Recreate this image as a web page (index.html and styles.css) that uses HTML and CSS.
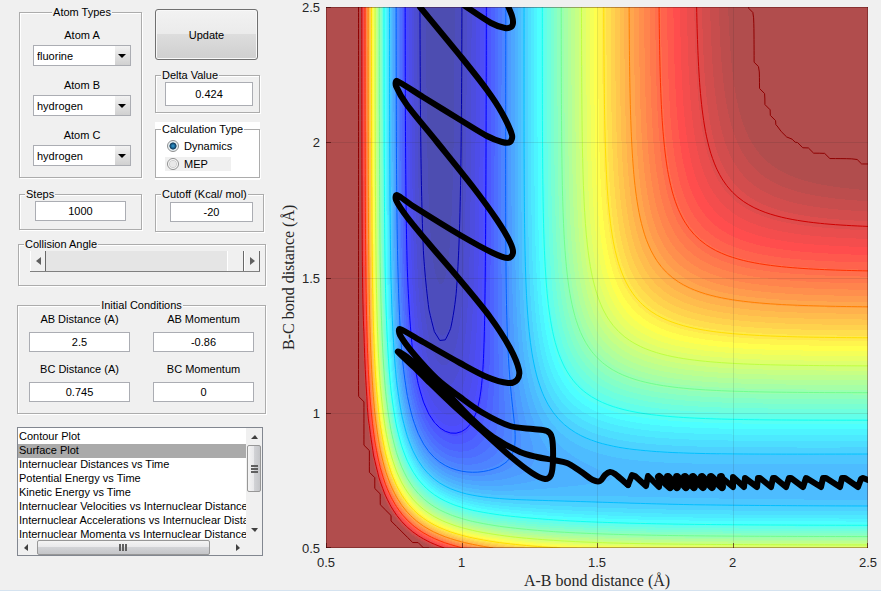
FILE: index.html
```html
<!DOCTYPE html>
<html lang="en">
<head>
    <meta charset="UTF-8">
    <title>LEPS GUI</title>
    <link rel="stylesheet" href="styles.css">
</head>
<body>
    <form class="controls">
        <div class="top">
            <!-- Left column -->
            <div class="column">
                <fieldset class="group atoms">
                    <legend>Atom Types</legend>
                    <label for="atomA">Atom A</label>
                    <div class="dropdown">
                        <select id="atomA"><option>fluorine</option><option>hydrogen</option></select>
                    </div>
                    <label for="atomB">Atom B</label>
                    <div class="dropdown">
                        <select id="atomB"><option>hydrogen</option><option>fluorine</option></select>
                    </div>
                    <label for="atomC">Atom C</label>
                    <div class="dropdown">
                        <select id="atomC"><option>hydrogen</option><option>fluorine</option></select>
                    </div>
                </fieldset>
                <fieldset class="group steps">
                    <legend>Steps</legend>
                    <div class="inner">
                        <input type="text" class="field" aria-label="Steps" value="1000">
                    </div>
                </fieldset>
            </div>

            <!-- Right column -->
            <div class="column">
                <button type="button" class="update">Update</button>
                <fieldset class="group delta">
                    <legend>Delta Value</legend>
                    <div class="inner">
                        <input type="text" class="field tall" aria-label="Delta Value" value="0.424">
                    </div>
                </fieldset>
                <div class="white">
                    <fieldset class="group calc">
                        <legend>Calculation Type</legend>
                        <div class="inner">
                            <label class="radio"><input type="radio" name="calc" checked>Dynamics</label>
                            <label class="radio shaded"><input type="radio" name="calc">MEP</label>
                        </div>
                    </fieldset>
                </div>
                <fieldset class="group cutoff">
                    <legend>Cutoff (Kcal/ mol)</legend>
                    <div class="inner">
                        <input type="text" class="field" aria-label="Cutoff" value="-20">
                    </div>
                </fieldset>
            </div>
        </div>

        <fieldset class="group angle">
            <legend>Collision Angle</legend>
            <div class="slider">
                <button type="button" aria-label="Decrease"><svg width="5" height="8" viewBox="0 0 5 8"><path d="M5 0V8L0 4Z"/></svg></button>
                <input type="range" min="0" max="180" value="180" aria-label="Collision Angle">
                <button type="button" aria-label="Increase"><svg width="5" height="8" viewBox="0 0 5 8"><path d="M0 0V8L5 4Z"/></svg></button>
            </div>
        </fieldset>

        <fieldset class="group initial">
            <legend>Initial Conditions</legend>
            <div class="cell">
                <label for="abDist">AB Distance (A)</label>
                <input type="text" class="field" id="abDist" value="2.5">
            </div>
            <div class="cell">
                <label for="abMom">AB Momentum</label>
                <input type="text" class="field" id="abMom" value="-0.86">
            </div>
            <div class="cell">
                <label for="bcDist">BC Distance (A)</label>
                <input type="text" class="field" id="bcDist" value="0.745">
            </div>
            <div class="cell">
                <label for="bcMom">BC Momentum</label>
                <input type="text" class="field" id="bcMom" value="0">
            </div>
        </fieldset>

        <!-- Plot list with its scroll bars -->
        <div class="listbox">
            <select size="8" aria-label="Plot type">
                <option>Contour Plot</option>
                <option selected>Surface Plot</option>
                <option>Internuclear Distances vs Time</option>
                <option>Potential Energy vs Time</option>
                <option>Kinetic Energy vs Time</option>
                <option>Internuclear Velocities vs Internuclear Distance</option>
                <option>Internuclear Accelerations vs Internuclear Distance</option>
                <option>Internuclear Momenta vs Internuclear Distance</option>
            </select>
            <div class="vbar">
                <svg class="arrow" width="7" height="4" viewBox="0 0 7 4"><path d="M0 4H7L4 0Z"/></svg>
                <div class="thumb"><i></i><i></i><i></i></div>
                <svg class="arrow" width="7" height="4" viewBox="0 0 7 4"><path d="M0 0H7L4 4Z"/></svg>
            </div>
            <div class="hbar">
                <svg class="arrow" width="4" height="7" viewBox="0 0 4 7"><path d="M4 0V7L0 4Z"/></svg>
                <div class="thumb"><i></i><i></i><i></i></div>
                <svg class="arrow" width="4" height="7" viewBox="0 0 4 7"><path d="M0 0V7L4 4Z"/></svg>
            </div>
        </div>
    </form>

    <div class="plot">
        <div class="ylabel">B-C bond distance (Å)</div>
        <div class="yticks"><span>2.5</span><span>2</span><span>1.5</span><span>1</span><span>0.5</span></div>
        <div class="area"><canvas id="surface"></canvas></div>
        <div class="xticks"><span>0.5</span><span>1</span><span>1.5</span><span>2</span><span>2.5</span></div>
        <div class="xlabel">A-B bond distance (Å)</div>
    </div>

    <script src="plot.js"></script>
</body>
</html>
```
FILE: styles.css
```css
* {
    box-sizing: border-box;
}
body {
    margin: 0;
    min-height: 100vh;
    display: flex;
    background-color: #f0f0f0;
    border-bottom: 1px solid #d5e3f0;
    font-family: "Liberation Sans", Arial, sans-serif;
    font-size: 11px;
    line-height: 14px;
    color: #000;
}
input, select, button {
    font: inherit;
    color: inherit;
    margin: 0;
}

/* Left panel */
.controls {
    width: 266px;
    flex: none;
    padding: 5px 0 0 17px;
}
.top {
    display: grid;
    grid-template-columns: 123px 108px;
    column-gap: 13px;
    padding-left: 2px;
}
.column {
    display: flex;
    flex-direction: column;
}
.group {
    min-width: 0;
    margin: 0;
    padding: 0;
    border: 1px solid #acacac;
    box-shadow: 1px 1px 0 #fff, inset 1px 1px 0 #fff;
}
.group legend {
    margin-left: 5px;
    padding: 0 1px;
    background-color: #f0f0f0;
    white-space: nowrap;
}
.field {
    display: block;
    width: 100%;
    height: 20px;
    padding: 0;
    border: 1px solid #abadb3;
    background-color: #fff;
    text-align: center;
}
.tall {
    height: 24px;
}
.atoms {
    height: 173px;
    padding: 9px 10px 0 13px;
}
.group.atoms legend, .group.initial legend {
    margin: 0 auto;
}
.atoms label {
    display: block;
    text-align: center;
}
.dropdown {
    position: relative;
    margin: 3px 0 12px;
}
.dropdown select {
    display: block;
    appearance: none;
    width: 100%;
    height: 21px;
    padding: 0 3px;
    border: 1px solid #abadb3;
    border-radius: 0;
    background-color: #fff;
}
.dropdown::before {
    content: "";
    position: absolute;
    right: 1px;
    top: 1px;
    bottom: 1px;
    width: 15px;
    background: linear-gradient(#f2f2f2, #d0d0d0);
    pointer-events: none;
}
.dropdown::after {
    content: "";
    position: absolute;
    right: 5px;
    top: 9px;
    border: 4px solid transparent;
    border-top-color: #000;
    border-bottom: 0;
    pointer-events: none;
}
.steps {
    height: 43px;
    margin-top: 9px;
}
.steps .inner {
    padding: 0 15px;
}
.update {
    width: 103px;
    height: 51px;
    margin: 4px 0 8px;
    border: 1px solid #707070;
    border-radius: 3px;
    background: linear-gradient(#f2f2f2, #ebebeb 49%, #dddddd 50%, #cfcfcf);
    box-shadow: inset 0 0 0 1px #f8f8f8;
}
.delta {
    width: 105px;
    height: 45px;
}
.delta .inner {
    padding: 0 6px 0 9px;
}
.white {
    width: 105px;
    margin-top: 9px;
    padding-bottom: 2px;
    background-color: #fff;
}
.calc {
    height: 56px;
}
.calc .inner {
    padding: 1px 9px 0;
}
.group.calc legend {
    background-color: #fff;
}
.radio {
    display: flex;
    align-items: center;
    gap: 5px;
    height: 14px;
    margin: 2px 0 4px;
}
.shaded {
    width: 66px;
    background-color: #f0f0f0;
}
.radio input {
    appearance: none;
    width: 12px;
    height: 12px;
    margin-left: 2px;
    border: 1px solid #8e8f8f;
    border-radius: 50%;
    background: radial-gradient(#e8e8e8 40%, #d0d0d0 50%, #fff 65%);
}
.radio input:checked {
    background: radial-gradient(circle at 50% 50%, #3ba0d0 0, #1c6a9c 25%, #123a58 45%, #e8f0f4 55%);
}
.cutoff {
    width: 109px;
    height: 45px;
    margin-top: 7px;
}
.cutoff .inner {
    padding: 1px 10px 0 14px;
}

.angle {
    height: 49px;
    margin-top: 5px;
    margin-left: 1px;
}
.slider {
    display: flex;
    height: 21px;
    margin: 0 5px 0 11px;
    border-bottom: 1px solid #808080;
}
.slider button {
    width: 16px;
    padding: 0;
    border: 0;
    border-left: 1px solid #fff;
    border-right: 1px solid #696969;
    background-color: #f0f0f0;
    fill: #606060;
}
.slider input {
    appearance: none;
    flex: 1;
    min-width: 0;
    height: 20px;
    background-color: #e5e5e5;
}
.slider input::-webkit-slider-thumb {
    appearance: none;
    width: 17px;
    height: 20px;
    border-left: 1px solid #fff;
    border-right: 1px solid #696969;
    background-color: #f0f0f0;
}

.initial {
    height: 116px;
    margin-top: 12px;
    display: grid;
    grid-template-columns: 101px 101px;
    column-gap: 23px;
    row-gap: 10px;
    align-content: start;
    padding: 0 11px;
}
.cell {
    text-align: center;
}
.cell label {
    display: block;
    height: 20px;
}

/* List box */
.listbox {
    width: 246px;
    height: 129px;
    margin-top: 13px;
    display: grid;
    grid-template-columns: 228px 1fr;
    grid-template-rows: 111px 1fr;
    border: 1px solid #828790;
}
.listbox select {
    display: block;
    width: 100%;
    height: 111px;
    padding: 2px 0 0;
    border: 0;
    border-radius: 0;
    background-color: #fff;
    overflow: hidden;
    scrollbar-width: none;
}
.listbox option {
    min-height: 14px;
    height: 14px;
    padding: 0 1px;
    line-height: 14px;
    white-space: nowrap;
}
.listbox option:checked {
    color: #000;
    background: linear-gradient(#aaa, #aaa);
}
.vbar, .hbar {
    display: flex;
    align-items: center;
    justify-content: space-between;
    background-color: #f0f0f0;
}
.vbar {
    flex-direction: column;
    padding: 7px 0;
}
.hbar {
    padding: 0 6px;
}
.thumb {
    display: flex;
    align-items: center;
    justify-content: center;
    gap: 1px;
    border: 1px solid #979797;
    border-radius: 2px;
}
.thumb i {
    background-color: #606060;
}
.vbar .thumb {
    flex-direction: column;
    width: 14px;
    height: 47px;
    margin-bottom: 30px;
    background: linear-gradient(to right, #f4f4f4, #e8e8ea 49%, #d2d3d6 50%, #c4c5c8);
}
.vbar .thumb i {
    width: 7px;
    height: 2px;
}
.hbar .thumb {
    width: 173px;
    height: 15px;
    margin-right: 18px;
    background: linear-gradient(#f4f4f4, #e8e8ea 49%, #d2d3d6 50%, #c4c5c8);
}
.hbar .thumb i {
    width: 2px;
    height: 7px;
}
.arrow {
    fill: #404040;
}

/* Plot */
.plot {
    flex: 1;
    min-width: 0;
    display: grid;
    grid-template-columns: 20px 26px minmax(0, 1fr);
    grid-template-rows: minmax(0, 1fr) 24px 18px;
    padding: 7px 13px 0 14px;
    color: #262626;
    font-size: 13px;
}
.ylabel, .xlabel {
    font-family: "Liberation Serif", "Times New Roman", serif;
    font-size: 16px;
    line-height: 18px;
    text-align: center;
}
.ylabel {
    writing-mode: vertical-rl;
    transform: rotate(180deg);
}
.yticks, .xticks {
    display: flex;
    justify-content: space-between;
}
.yticks {
    flex-direction: column;
    align-items: flex-end;
    padding-right: 6px;
}
.yticks span {
    height: 0;
    line-height: 2px;
}
.area {
    min-height: 0;
    overflow: hidden;
}
.area canvas {
    display: block;
    width: 100%;
    height: 100%;
}
.xticks {
    grid-column: 3;
    padding-top: 8px;
}
.xticks span {
    display: flex;
    justify-content: center;
    width: 0;
}
.xlabel {
    grid-column: 3;
}
```
FILE: plot.js
```js
// LEPS parameters: well depth (kcal/mol), beta, equilibrium distance, Sato
var HF = { d: 141.196, b: 2.2187, r: 0.917, k: 0.18 };
var HH = { d: 109.449, b: 1.942, r: 0.7419, k: 0.175 };
var CUTOFF = -22;
var VMIN = -141;
var MIN = 0.5, MAX = 2.5, STEP = 0.02;

function terms(p, r) {
    var e = Math.exp(-p.b * (r - p.r));
    var c = p.d / (4 * (1 + p.k));
    return {
        q: c * ((3 + p.k) * e * e - (2 + 6 * p.k) * e),
        j: c * ((1 + 3 * p.k) * e * e - (6 + 2 * p.k) * e)
    };
}

// Potential for a collinear geometry
function potential(ab, bc) {
    var a = terms(HF, ab), b = terms(HH, bc), c = terms(HF, ab + bc);
    var s = Math.pow(a.j - b.j, 2) + Math.pow(b.j - c.j, 2) + Math.pow(c.j - a.j, 2);
    return Math.min(CUTOFF, a.q + b.q + c.q - Math.sqrt(s / 2));
}

function jet(t, alpha) {
    t = Math.max(1, Math.min(63, Math.floor(t * 64) + 1)) / 64;
    function channel(centre) {
        var v = Math.max(0, Math.min(1, 1.5 - Math.abs(4 * t - centre)));
        return Math.round(255 * (v * alpha + 1 - alpha));
    }
    return [channel(3), channel(2), channel(1)];
}

// Trajectory, in units of a 542 x 541 plot
var loops = [
    [[182,-1],[186,9],[187,16],[185,20],[179,21],[165,16],[139,-1]],
    [[94,0],[136,51],[161,83],[176,106],[186,128],[184,135],[176,135],[161,129],[136,114],
     [97,90],[71,74],[70,79],[81,98],[111,135],[147,180],[171,213],[184,235],[187,246],[182,251],
     [167,246],[134,228],[87,199],[71,188],[70,193],[81,210],[104,238],[134,273],[164,310],
     [184,341],[193,363],[191,373],[182,376],[161,370],[134,356],[97,335],[74,322],[74,328],
     [87,346],[111,372],[134,390],[157,406],[184,419],[207,422],[221,424],[226,431],[227,453],
     [225,468],[219,472],[206,466],[184,449],[154,422],[127,398],[101,373],[91,363],[72,345],
     [81,350],[97,364],[114,379],[147,413],[167,430],[194,445],[211,450],[227,453],[241,456],
     [254,464],[267,473],[274,474],[279,468],[284,465],[289,467],[302,478]]
];
var zigzag = [[302,478],[306,468],[309,469],[320,479],[322,469],[333,480],[333,470],[344,480],
    [342,470],[351,480],[351,470],[360,480],[359,470],[368,480],[367,470],[377,480],[376,470],
    [386,480],[385,470],[396,480],[395,470],[407,480],[407,470],[418,480],[419,471],[431,480],
    [432,471],[434,471],[445,480],[447,471],[449,471],[460,480],[463,471],[465,471],[477,480],
    [480,471],[482,472],[495,480],[497,471],[500,471],[514,480],[516,471],[519,471],[532,480],
    [535,472],[537,471],[542,473]];

function drawSurface(ctx, w, h) {
    var img = ctx.createImageData(w, h);
    for (var y = 0; y < h; y++) {
        for (var x = 0; x < w; x++) {
            var v = potential(MIN + 2 * x / w, MAX - 2 * y / h);
            var c = jet((v - VMIN) / (CUTOFF - VMIN), 0.7);
            img.data.set([c[0], c[1], c[2], 255], (y * w + x) * 4);
        }
    }
    ctx.putImageData(img, 0, 0);
}

function drawContour(ctx, w, h, level, colour) {
    var n = Math.round((MAX - MIN) / STEP);
    ctx.strokeStyle = colour;
    ctx.lineWidth = 1;
    ctx.beginPath();
    for (var i = 0; i < n; i++) {
        for (var j = 0; j < n; j++) {
            var c = [[i, j], [i + 1, j], [i + 1, j + 1], [i, j + 1]];
            var hits = [];
            for (var k = 0; k < 4; k++) {
                var p = c[k], q = c[(k + 1) % 4];
                var a = potential(MIN + p[0] * STEP, MIN + p[1] * STEP) - level;
                var b = potential(MIN + q[0] * STEP, MIN + q[1] * STEP) - level;
                if (a < 0 !== b < 0) {
                    var t = a / (a - b);
                    hits.push([(p[0] + t * (q[0] - p[0])) / n * w, h - (p[1] + t * (q[1] - p[1])) / n * h]);
                }
            }
            if (hits.length > 1) {
                ctx.moveTo(hits[0][0], hits[0][1]);
                ctx.lineTo(hits[1][0], hits[1][1]);
            }
        }
    }
    ctx.stroke();
}

function drawAxes(ctx, w, h) {
    for (var i = 0; i <= 4; i++) {
        var x = Math.min(w - 1, Math.round(w * i / 4)) + 0.5;
        var y = Math.min(h - 1, Math.round(h * i / 4)) + 0.5;
        ctx.strokeStyle = i % 4 ? "rgba(38,38,38,0.12)" : "rgba(60,0,0,0.35)";
        ctx.beginPath();
        ctx.moveTo(x, 0);
        ctx.lineTo(x, h);
        ctx.moveTo(0, y);
        ctx.lineTo(w, y);
        ctx.stroke();
        ctx.strokeStyle = "rgba(60,0,0,0.6)";
        ctx.beginPath();
        ctx.moveTo(x, h);
        ctx.lineTo(x, h - 5);
        ctx.moveTo(0, y);
        ctx.lineTo(5, y);
        ctx.stroke();
    }
}

// Smooth curve through the points
function drawCurve(ctx, pts) {
    ctx.beginPath();
    ctx.moveTo(pts[0][0], pts[0][1]);
    for (var i = 0; i < pts.length - 1; i++) {
        var a = pts[i - 1] || pts[i], b = pts[i], c = pts[i + 1], d = pts[i + 2] || c;
        // limit the handles where a long stretch meets a tight turn
        var len = Math.hypot(c[0] - b[0], c[1] - b[1]);
        var s1 = Math.min(1 / 6, len / 3 / Math.hypot(c[0] - a[0], c[1] - a[1]));
        var s2 = Math.min(1 / 6, len / 3 / Math.hypot(d[0] - b[0], d[1] - b[1]));
        ctx.bezierCurveTo(b[0] + (c[0] - a[0]) * s1, b[1] + (c[1] - a[1]) * s1,
            c[0] - (d[0] - b[0]) * s2, c[1] - (d[1] - b[1]) * s2, c[0], c[1]);
    }
    ctx.stroke();
}

function drawLine(ctx, pts, width) {
    ctx.lineWidth = width;
    ctx.beginPath();
    pts.forEach(function (p) { ctx.lineTo(p[0], p[1]); });
    ctx.stroke();
}

function draw() {
    var canvas = document.getElementById("surface");
    var w = canvas.width = canvas.parentNode.clientWidth;
    var h = canvas.height = canvas.parentNode.clientHeight;
    var ctx = canvas.getContext("2d");
    drawSurface(ctx, w, h);
    for (var k = 0; k < 12; k++) {
        var level = k ? -22 - 10.45 * k : CUTOFF - 0.01;
        var c = jet((level - VMIN) / (CUTOFF - VMIN), 1);
        drawContour(ctx, w, h, level, "rgb(" + c + ")");
    }
    drawAxes(ctx, w, h);

    ctx.scale(w / 542, h / 541);
    ctx.strokeStyle = "#000";
    ctx.lineWidth = 6;
    ctx.lineJoin = "round";
    ctx.lineCap = "round";
    loops.forEach(function (pts) { drawCurve(ctx, pts); });
    drawLine(ctx, zigzag, 6);
    // the oscillations run together in the middle
    drawLine(ctx, zigzag.slice(6, 21), 8);
}

draw();
window.addEventListener("resize", draw);
```
